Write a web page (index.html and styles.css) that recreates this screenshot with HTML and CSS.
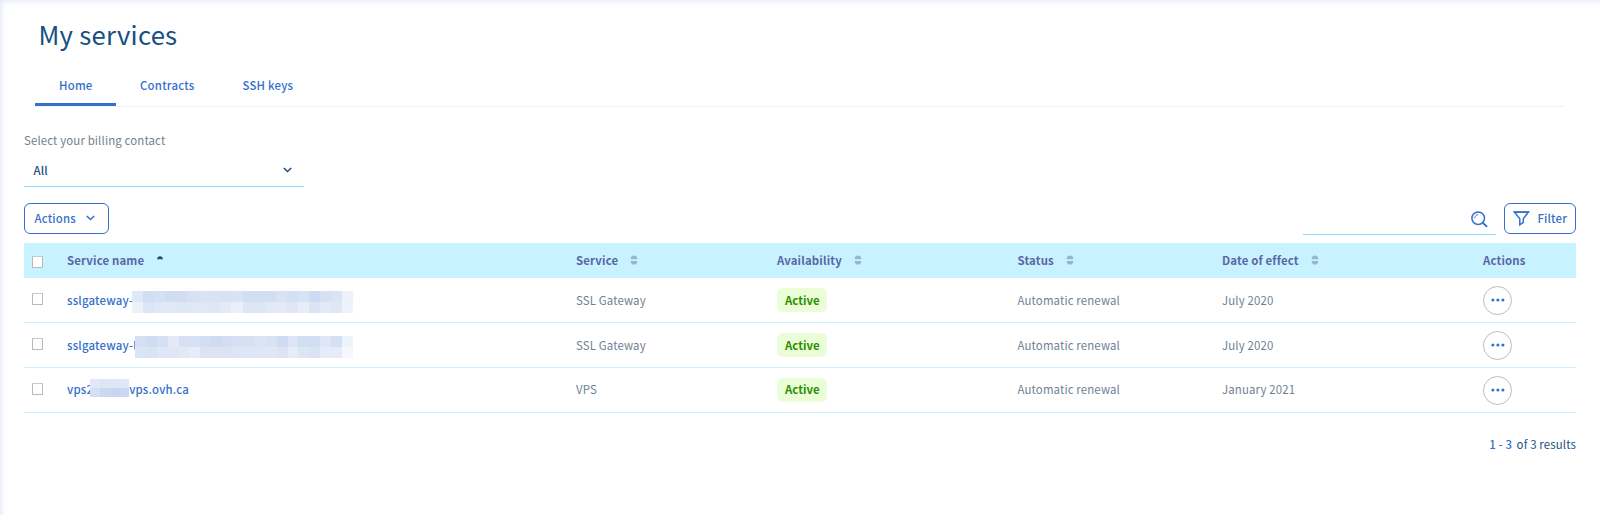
FILE: index.html
```html
<!DOCTYPE html>
<html lang="en">
<head>
<meta charset="utf-8">
<title>My services</title>
<link rel="stylesheet" href="styles.css">
</head>
<body>
<svg class="defs" width="0" height="0">
  <symbol id="sort" viewBox="0 0 8 10"><path d="M.6 4.2C.6 2 2 .4 4 .4s3.400 1.600 3.400 3.800zM.6 5.900h6.800C7.400 8 6 9.600 4 9.600S.6 8 .6 5.900z"/></symbol>
  <symbol id="chevron" viewBox="0 0 9 6"><path d="M.8 1l3.700 3.500L8.200 1" fill="none" stroke="currentColor" stroke-width="1.600"/></symbol>
  <symbol id="dots" viewBox="0 0 14 4"><circle cx="1.900" cy="2" r="1.550"/><circle cx="6.900" cy="2" r="1.550"/><circle cx="11.900" cy="2" r="1.550"/></symbol>
</svg>
<main class="page">
  <h1 class="title">My services</h1>
  <nav class="tabs">
    <a class="tab tab-active">Home</a>
    <a class="tab">Contracts</a>
    <a class="tab">SSH keys</a>
  </nav>
  <label class="label">Select your billing contact</label>
  <div class="select"><span>All</span><svg class="chevron"><use href="#chevron"/></svg></div>
  <div class="toolbar">
    <button class="btn btn-actions">Actions<svg class="chevron"><use href="#chevron"/></svg></button>
    <div class="search">
      <svg class="search-icon" viewBox="0 0 17 17" fill="none" stroke="currentColor"><circle cx="7.200" cy="7.200" r="6.300" stroke-width="1.500"/><path d="M3.700 7.200c0-2 1.500-3.500 3.500-3.500" stroke-width=".9"/><path d="M11.700 11.700l4.400 4.200" stroke-width="1.900"/></svg>
    </div>
    <button class="btn btn-filter"><svg class="filter-icon" viewBox="0 0 17 15" fill="none" stroke="currentColor" stroke-width="1.500"><path d="M1.300 1h14.200l-5.200 6.700v3.700L6.800 13.800V7.700z"/><path d="M.8 1.200h15.200"/></svg>Filter</button>
  </div>
  <div class="table">
    <div class="row head">
      <i class="box"></i>
      <span>Service name<svg class="asc" viewBox="0 0 6 4"><path d="M0 3.300C.3 1.300 1.400.2 3 .2s2.700 1.100 3 3.100z"/></svg></span>
      <span>Service<svg class="sort"><use href="#sort"/></svg></span>
      <span>Availability<svg class="sort"><use href="#sort"/></svg></span>
      <span>Status<svg class="sort"><use href="#sort"/></svg></span>
      <span>Date of effect<svg class="sort"><use href="#sort"/></svg></span>
      <span>Actions</span>
    </div>
    <div class="row">
      <i class="box"></i>
      <a class="name">sslgateway-<span class="mosaic m1" data-cells="dfe8f7 d2def2 d5e0f3 d0dcf3 d2ddf2 d7e1f3 d9e3f4 d8e2f5 d8e2f5 dae3f4 d2def1 d2def1 d2def2 d9e3f4 d3dff4 d8e2f5 cfdbf4 d7e1f4 dae4f5 edf2fa|edf1fa dce5f5 dfe8f6 e1e9f7 dee7f6 dfe8f6 e0e8f6 dde7f5 e4eaf7 ebeff9 dce6f4 dce7f5 e2e9f6 e3e9f7 dfe7f5 e8edf8 dbe4f4 e3eaf7 dfe7f5 eef2fb"></span></a>
      <span>SSL Gateway</span><span><b class="badge">Active</b></span><span>Automatic renewal</span><span>July 2020</span>
      <button class="more"><svg class="dots"><use href="#dots"/></svg></button>
    </div>
    <div class="row">
      <i class="box"></i>
      <a class="name">sslgateway-l<span class="mosaic m2" data-cells="d3dff3 d0dcf2 d5e0f3 e3e9f7 d7e1f3 d6e1f3 d2def2 cedbf2 d1def3 d5e1f2 d5e1f2 d9e4f5 d8e2f4 cfdbf2 dce5f5 d2def2 d2def2 dfe6f6 d3dff2 edf3fb|dbe4f4 d8e3f4 dfe7f6 dfe7f6 e1e9f6 e7edf8 dae4f5 dce3f1 dae4f4 dce6f5 dce7f5 dee5f4 dfe6f4 dce4f4 e6ecf9 dce6f5 d9e3f4 e5ebf8 e5ebf8 f6f8fd"></span></a>
      <span>SSL Gateway</span><span><b class="badge">Active</b></span><span>Automatic renewal</span><span>July 2020</span>
      <button class="more"><svg class="dots"><use href="#dots"/></svg></button>
    </div>
    <div class="row row-last">
      <i class="box"></i>
      <a class="name name-last">vps2<span class="mosaic m3" data-cells="e1e8f6 dde6f6 dfe6f6 e0e7f5|d5e0f4 cad8f1 c8d6f1 cbd8f1"></span><span>vps.ovh.ca</span></a>
      <span>VPS</span><span><b class="badge">Active</b></span><span>Automatic renewal</span><span>January 2021</span>
      <button class="more"><svg class="dots"><use href="#dots"/></svg></button>
    </div>
  </div>
  <div class="pager"><b>1 - 3</b><span>of 3 results</span></div>
</main>
<script src="mosaic.js"></script>
</body>
</html>
```
FILE: mosaic.js
```javascript
// Fill each redaction block with its grid of coloured cells.
document.querySelectorAll('.mosaic').forEach(function (block) {
  block.dataset.cells.split('|').forEach(function (line) {
    line.split(' ').forEach(function (color) {
      var cell = document.createElement('i');
      cell.style.background = '#' + color;
      block.appendChild(cell);
    });
  });
});
```
FILE: styles.css
```css
* { box-sizing: border-box; }
body {
  margin: 0;
  font: 11.4px/18px "Noto Sans CJK SC", "Noto Sans", sans-serif;
  letter-spacing: .15px;
  color: #6f7f93;
  background: #fff;
}
.defs { display: block; height: 0; }
.page {
  height: 515px;
  padding: 16px 24px 0;
  box-shadow: inset 3px 3px 4px -1px #e8ebf8;
}
.title {
  margin: 0 0 0 14.5px;
  font-size: 25.7px;
  letter-spacing: .25px;
  line-height: 36px;
  font-weight: 400;
  color: #174f80;
}
.tabs {
  display: flex;
  margin: 18px 12px 0 11px;
  height: 37px;
  border-bottom: 1px solid #e6f6ff;
}
.tab {
  height: 36px;
  padding: 6px 24px 0;
  font-weight: 500;
  letter-spacing: .22px;
  color: #3570cb;
}
.tab-active { width: 81px; border-bottom: 3px solid #3570cb; }
.label { display: block; margin-top: 24px; }
.select {
  display: flex;
  align-items: center;
  justify-content: space-between;
  width: 280px;
  height: 31px;
  margin-top: 7px;
  padding: 0 12.5px 2px 9.5px;
  border-bottom: 1px solid #8edcf6;
  font-weight: 500;
  color: #174f80;
}
.chevron { width: 9px; height: 6px; }
.toolbar { display: flex; height: 31px; margin-top: 16px; }
.btn {
  display: flex;
  align-items: center;
  height: 31px;
  border: 1px solid #3570cb;
  border-radius: 6px;
  background: #fff;
  color: #3570cb;
  font: inherit;
  letter-spacing: inherit;
  font-weight: 500;
}
.btn-actions { width: 85px; padding: 0 0 1px 9.5px; gap: 10.5px; }
.btn-filter { width: 72px; margin-left: 8px; padding: 0 0 1px 8px; gap: 7.5px; }
.filter-icon { width: 17px; height: 15px; }
.search {
  display: flex;
  justify-content: flex-end;
  width: 193px;
  height: 32px;
  margin-left: auto;
  padding: 7.5px 8px 0 0;
  border-bottom: 1px solid #8edcf6;
  color: #3570cb;
}
.search-icon { width: 17px; height: 17px; }
.table { margin-top: 9px; }
.row {
  display: grid;
  grid-template-columns: 43px 509px 201px 240.500px 204.500px 261px 93px;
  align-items: center;
  height: 45px;
  border-bottom: 1px solid #c8f2ff;
}
.head {
  height: 35px;
  padding-bottom: 2px;
  border: 0;
  background: #c8f2ff;
  color: #5a67a5;
  font-weight: 700;
}
.row-last > span, .name-last { margin-top: -2px; }
.box {
  width: 11px;
  height: 12px;
  margin-left: 8px;
  border: 1px solid #b9b9b9;
  border-top-color: #c9c9c9;
  background: #fff;
  position: relative;
  top: -1px;
}
.head .box { top: 2px; }
.sort { width: 8px; height: 10px; margin-left: 12px; fill: #92b8cb; }
.asc { width: 6px; height: 4px; margin: 0 0 5px 13px; fill: #174f80; }
.name { position: relative; font-weight: 500; letter-spacing: .2px; color: #3570cb; }
.mosaic {
  position: absolute;
  display: grid;
  grid-template-columns: repeat(20, 1fr);
  height: 22px;
}
.m1 { left: 65px; top: 0; width: 221px; }
.m2 { left: 68px; top: 0; width: 218px; }
.m3 { left: 23px; top: -1px; width: 39px; height: 18px; grid-template-columns: repeat(4, 1fr); }
.name-last { display: flex; gap: 36px; }
.badge {
  display: inline-block;
  width: 50px;
  height: 24px;
  padding: 0 0 0 8px;
  border-radius: 6px;
  line-height: 24px;
  letter-spacing: 0;
  vertical-align: middle;
  background: #ebfdd7;
  color: #2b8f00;
}
.row-last .badge { line-height: 23px; position: relative; top: 1px; }
.more {
  display: flex;
  align-items: center;
  justify-content: center;
  width: 29px;
  height: 29px;
  padding: 0;
  border: 1px solid #bdbdbd;
  border-radius: 50%;
  background: #fff;
}
.dots { width: 14px; height: 4px; fill: #3570cb; }
.pager {
  display: flex;
  justify-content: flex-end;
  gap: 4.5px;
  margin-top: 22px;
  color: #174f80;
}
.pager b { font-weight: 500; color: #3570cb; }
```
